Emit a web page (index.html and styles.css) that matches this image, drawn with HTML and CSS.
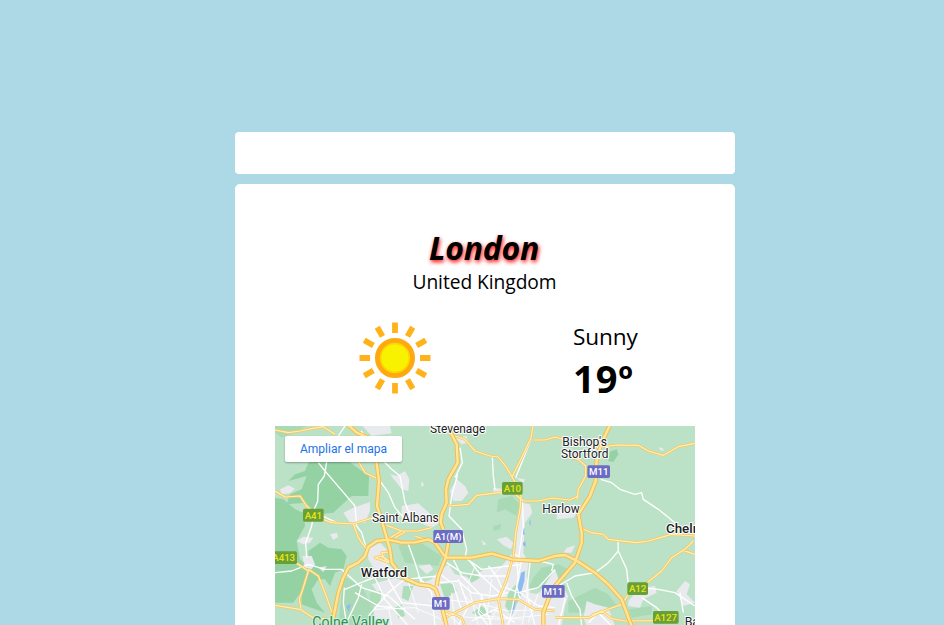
FILE: index.html
```html
<!DOCTYPE html>
<html lang="en">
<head>
<meta charset="utf-8">
<title>Weather</title>
<link rel="stylesheet" href="styles.css">
</head>
<body>
<main class="app">
  <input class="search" type="text" aria-label="City">
  <section class="card">
    <h1 class="city">London</h1>
    <p class="country">United Kingdom</p>
    <div class="weather">
      <div class="cell">
        <svg class="sun" viewBox="-36 -36 72 72">
          <g stroke="#ffb21c" stroke-width="5.8">
            <path d="M0-35.5V-25M0 25V35.5M-35.5 0H-25M25 0H35.5"/>
            <path transform="rotate(30)" d="M0-35.5V-25M0 25V35.5M-35.5 0H-25M25 0H35.5"/>
            <path transform="rotate(60)" d="M0-35.5V-25M0 25V35.5M-35.5 0H-25M25 0H35.5"/>
          </g>
          <circle r="17" fill="#f8f200" stroke="#ffa911" stroke-width="6"/>
          <circle r="14.4" fill="none" stroke="#ffd500" stroke-width="1.5"/>
        </svg>
      </div>
      <div class="cell">
        <div class="reading">
          <p class="condition">Sunny</p>
          <p class="temp">19º</p>
        </div>
      </div>
    </div>
    <div class="map">
      <svg class="tiles" viewBox="0 0 1260 597">
        <defs>
          <path id="motorway" d="M525 15L545 55L548 110L520 160L513 190L515 230L500 265L497 290L505 310M525 320L512 395L490 450L485 480M172 600L178 560L190 500L205 455L220 425L250 410L270 390L280 362L305 345L340 341L380 350L420 349L460 340L480 350L512 395L590 395L650 383L710 400L790 405L840 390L870 387L910 407L960 440L1000 475L1040 520L1070 600M218-5L245 20L280 35L298 60L302 90L312 165L306 240L322 290L345 370L350 410L385 455L430 475L465 480L482 490L500 540L515 600M1006-5L980 50L965 100L962 165L945 210L910 265L920 320L920 350L900 410L840 480L820 520L805 560L805 600"/>
          <path id="minor" d="M0 12L40 20L75 15L110 8L145 2L180 25M0 195L30 213L75 210L95 240L130 275L170 290L235 294L295 275M238 85L270 140L303 156M235 294L250 335L275 370M540 30L570 40L600 75L645 90L670 93L695 125L718 165L738 210L735 250L722 320L715 390L695 460L670 520L685 600M775-5L768 35L740 95L710 155M776 42L810 42L840 33L870 42M520 240L580 235L605 208L670 200L705 192L745 225L790 225L830 216L885 222L910 210M965 65L1025 57L1090 58L1120 75L1165 88L1210 62L1260 52M870 90L910 100L932 120L932 150L910 190L906 220M915 305L950 320L985 325L1000 340L1085 350L1120 345L1190 325L1260 330M1255 345L1230 370L1190 395L1160 435L1110 475L1060 505L1040 535L985 555L940 575L840 575M1225 373L1260 385M950 568L980 555L1010 578L1050 585L1150 584M0 538L75 550L115 575L175 580M65 412L100 435L83 490L73 520L78 547M100 430L130 450L150 500L175 570M350 410L320 390L300 395L345 410M340 338L380 315M335 298L380 315L430 315L470 305M360 335L390 318M420 330L460 345M500 580L550 555L600 530L670 518L730 520L780 550L840 555M500 550L560 575L570 600M335 410L320 380L345 378"/>
        </defs>
        <path fill="#bbe2c6" d="M0 0H1260V597H0z"/>
        <g fill="#94d2a4">
          <path d="M105 100L215 102L282 150L280 210L230 210L175 260L130 265L90 230L35 235L45 205L80 190L95 150L40 165L60 145L90 135z"/>
          <path d="M0 215L25 220L60 250L85 260L90 300L65 345L75 400L110 430L90 480L55 530L0 530z"/>
          <path d="M100 375L135 350L160 365L200 370L215 390L205 430L180 440L165 480L150 460L130 460L110 490L125 530L150 560L80 535L80 490L100 440z"/>
          <path d="M1005 77L1025 70L1030 85L1015 108L1000 105z"/>
        </g>
        <g fill="#a9dab5">
          <path d="M0 0H95L60 20L20 35L0 20zM670 220L710 210L735 235L725 270L690 250L665 260zM655 300L680 293L675 310L655 315zM775 455L800 425L850 415L880 430L850 465L790 490L760 485zM880 525L960 485L1000 505L1030 545L960 560L880 560zM1060 550L1130 540L1130 565L1070 575zM370 358L440 352L500 390L490 420L440 415L390 410zM205 450L260 480L300 560L260 597L190 597z"/>
        </g>
        <g fill="#e8eaed">
          <path d="M262 0L345 0L350 22L290 30zM345 145L365 150L390 135L403 160L400 195L380 190zM15 190L40 178L60 188L45 202L20 205zM205 260L235 245L285 228L285 255L270 290L225 290zM380 240L430 232L495 290L470 305L435 290L380 290zM65 345L85 332L115 335L105 350L85 355zM82 390L110 390L120 415L110 430L90 425zM280 370L315 350L335 370L325 400L355 430L345 460L310 450L280 400zM130 425L155 420L145 438zM165 325L185 320L190 332L175 342z"/>
          <path d="M545 160L570 180L580 200L560 225L535 225L525 195zM740 230L765 235L772 260L750 290L745 380L720 385L728 300zM845 255L900 235L915 250L895 275L845 280zM655 185L690 190L680 205L655 200zM540 35L575 30L580 50L560 55zM620 342L635 355L625 358zM665 340L695 332L715 350L708 370L685 358zM1155 63L1165 68L1165 76L1152 70zM440 165L448 178L438 182zM722 155L750 160L745 170z"/>
          <path d="M265 600L295 570L300 530L315 510L290 475L360 455L420 480L470 460L485 440L520 415L540 445L590 455L630 430L680 420L710 385L745 380L760 410L755 450L765 500L790 505L840 430L855 470L880 510L870 540L860 600zM925 575L935 525L960 535L1000 545L1020 600H935zM1060 525L1095 485L1140 480L1145 500L1105 520L1095 545L1060 540zM1205 495L1230 465L1245 475L1235 505L1260 530L1225 540zM430 420L465 415L475 430L455 445zM865 380L875 365L900 358L890 380z"/>
        </g>
        <g fill="#afddba">
          <path d="M495 475L535 470L545 495L510 520zM575 450L600 438L615 455L590 470zM285 500L320 495L315 535L285 545zM385 480L415 480L400 525L380 515zM590 560L620 540L650 565L610 570zM700 500L745 450L740 500L710 570L690 540zM360 545L380 535L390 570L370 575z"/>
        </g>
        <path fill="#8ebaf3" d="M738 440L750 435L748 465L735 510L725 500zM712 535L723 515L717 555L705 560zM744 350L751 345L752 362L744 358zM741 310L748 305L749 328L743 325zM762 290L768 278L766 300zM214 540L228 533L221 558z"/>
        <g class="local">
          <path d="M130 110L150 135L180 170L240 240L245 300M155 108L148 150L130 175L128 225L118 250L110 300L92 350M120 260L190 292M190 30L210 0M258 15L285 50M310 90L350 130L375 150L390 230L410 280M315 165L340 200L360 245L390 280M0 440L50 435L100 415L150 430L200 430L260 485L340 510L420 580M95 395L92 350M210 490L270 465L340 440L390 460L490 450M275 370L260 320L240 294M260 475L250 515L210 600M208 485L205 530L215 597"/>
          <path d="M652 92L655 150L660 190M555 65L562 110L540 155M548 145L530 210L522 270L560 310L575 370L570 395M768 40L722 155M742 220L745 300L730 400M977 160L1010 170L1035 190L1080 205L1100 200L1105 220L1150 250L1200 290M1029 345L1030 375L1055 430L1060 475M1030 375L1000 410L960 440L900 450L850 480M875 470L890 510L915 550L920 600M1095 485L1150 490L1200 500L1260 540M1215 500L1225 560M1100 515L1145 545L1160 560"/>
          <path d="M490 470L550 465L590 500L650 510L700 500M530 390L560 450L620 510L650 600M580 400L620 450L685 510M515 410L560 440L620 450L700 450M570 395L620 430L740 415M490 440L535 475L560 555M550 460L580 540L550 600M640 420L665 450L690 510M725 400L730 460L700 600M740 400L725 480L735 520M765 410L755 500L780 600M430 450L470 500L480 600M300 455L330 520L400 600M340 460L380 530L480 540M400 355L420 410L440 475M240 500L310 540L390 550M280 570L340 500L400 450M590 585L660 550L720 590M620 510L610 560L640 600M735 500L790 540L840 545M680 480L730 500L790 485L840 430M840 490L870 520L850 600M940 590L970 560L1010 600M795 405L835 415L830 435M720 385L740 400L770 405"/>
        </g>
        <g class="streets">
          <path d="M500 520L600 530L700 555L800 550M530 500L540 600M560 500L630 570L740 580M580 480L610 600M520 570L680 580L820 565M650 460L635 570M700 470L640 600M730 550L690 600M760 500L740 600M790 500L760 590M460 520L560 600M300 550L420 545L500 580M340 540L350 600M400 470L430 560M600 420L580 470M680 420L640 460"/>
        </g>
        <use href="#minor" class="edge-minor"/><use href="#minor" class="fill-minor"/>
        <use href="#motorway" class="edge-major"/><use href="#motorway" class="fill-major"/>
        <g class="shields">
          <g fill="#689f38"><rect x="84" y="248" width="62" height="39" rx="5"/><rect x="681" y="168" width="62" height="38" rx="5"/><rect x="-15" y="376" width="81" height="38" rx="5"/><rect x="1057" y="469" width="62" height="38" rx="5"/><rect x="1134" y="555" width="77" height="38" rx="5"/></g>
          <g fill="#6c6cc4"><rect x="937" y="118" width="68" height="38" rx="5"/><rect x="475" y="312" width="89" height="39" rx="5"/><rect x="471" y="513" width="53" height="38" rx="5"/><rect x="801" y="477" width="68" height="38" rx="5"/></g>
          <g fill="#e8e414"><text x="115" y="278">A41</text><text x="712" y="197">A10</text><text x="26" y="405">A413</text><text x="1088" y="498">A12</text><text x="1172" y="584">A127</text></g>
          <g fill="#fff"><text x="971" y="147">M11</text><text x="519" y="341">A1(M)</text><text x="497" y="542">M1</text><text x="835" y="506">M11</text></g>
        </g>
        <g class="places">
          <text x="548" y="21" textLength="166" lengthAdjust="spacingAndGlyphs">Stevenage</text>
          <text x="929" y="60" textLength="134" lengthAdjust="spacingAndGlyphs">Bishop's</text>
          <text x="929" y="96" textLength="142" lengthAdjust="spacingAndGlyphs">Stortford</text>
          <text x="391" y="289" textLength="200" lengthAdjust="spacingAndGlyphs">Saint Albans</text>
          <text x="858" y="262" textLength="112" lengthAdjust="spacingAndGlyphs">Harlow</text>
          <text x="1229" y="600" class="start">Basildon</text>
          <text x="327" y="452" textLength="139" lengthAdjust="spacingAndGlyphs" class="town">Watford</text>
          <text x="1173" y="320" class="town start">Chelmsford</text>
          <text x="227" y="603" textLength="230" lengthAdjust="spacingAndGlyphs" class="park">Colne Valley</text>
        </g>
      </svg>
      <a class="enlarge">Ampliar el mapa</a>
    </div>
  </section>
</main>
</body>
</html>
```
FILE: styles.css
```css
* { box-sizing: border-box; }
body {
  margin: 0;
  background: #add8e6;
  color: #000;
  font-family: "Open Sans", "Noto Sans", sans-serif;
}
.app {
  display: flex;
  flex-direction: column;
  gap: 10px;
  width: 500px;
  height: 625px;
  margin: 0 0 0 235px;
  padding-top: 132px;
}
.search {
  width: 100%;
  height: 42px;
  padding: 10px;
  border: 0;
  border-radius: 4px;
  background: #fff;
  outline: 0;
}
.card {
  flex: 1;
  min-height: 0;
  padding: 42px 40px 0;
  border-radius: 5px 5px 0 0;
  background: #fff;
}
.city, .country, .condition, .temp { margin: 0; }
.city {
  margin-left: -2px;
  text-align: center;
  font-size: 32px;
  line-height: 43px;
  font-style: italic;
  font-weight: 700;
  letter-spacing: -0.3px;
  text-shadow: 1px 2px 4px red;
}
.country {
  margin-left: -1px;
  text-align: center;
  font-size: 19.2px;
  line-height: 25px;
  padding-bottom: 2px;
  letter-spacing: -0.05px;
}
.weather {
  display: grid;
  grid-template-columns: 1fr 1fr;
  height: 130px;
  padding-top: 22px;
}
.cell {
  display: flex;
  justify-content: center;
  align-items: flex-start;
}
.sun {
  width: 72px;
  height: 72px;
  margin: 4px 0 0 30px;
  overflow: visible;
  filter: blur(.7px);
}
.reading { width: 65px; margin-left: 31px; }
.condition { padding-top: 1px; font-size: 22.6px; line-height: 35px; letter-spacing: -0.1px; }
.temp { font-size: 38px; line-height: 48px; font-weight: 700; letter-spacing: 0.9px; }
.map {
  position: relative;
  height: 199px;
  overflow: hidden;
}
.tiles { display: block; width: 420px; height: 199px; }
.enlarge {
  position: absolute;
  top: 10px;
  left: 10px;
  width: 117px;
  height: 26px;
  border-radius: 2px;
  background: #fff;
  box-shadow: 0 1px 2px rgba(0, 0, 0, .3);
  color: #1a73e8;
  font: 12px/26px Roboto, sans-serif;
  text-align: center;
}
.tiles use, .local, .streets { fill: none; stroke-linejoin: round; }
.edge-major { stroke: #f5bd4a; stroke-width: 13px; }
.fill-major { stroke: #ffe69b; stroke-width: 7px; }
.edge-minor { stroke: #f8c75e; stroke-width: 8px; }
.fill-minor { stroke: #fff0b8; stroke-width: 3.5px; }
.local { stroke: #fff; stroke-width: 4px; }
.streets { stroke: #fff; stroke-width: 2.5px; }
.shields { font: 500 29px Roboto, sans-serif; text-anchor: middle; }
.places {
  font: 37px Roboto, sans-serif;
  text-anchor: middle;
  fill: #202124;
  stroke: #fff;
  stroke-width: 6px;
  stroke-linejoin: round;
  paint-order: stroke;
}
.places .town { font-size: 40px; font-weight: 500; }
.places .start { text-anchor: start; }
.places .park { font-size: 42px; fill: #2b8f53; stroke: #d4efdc; }
```
